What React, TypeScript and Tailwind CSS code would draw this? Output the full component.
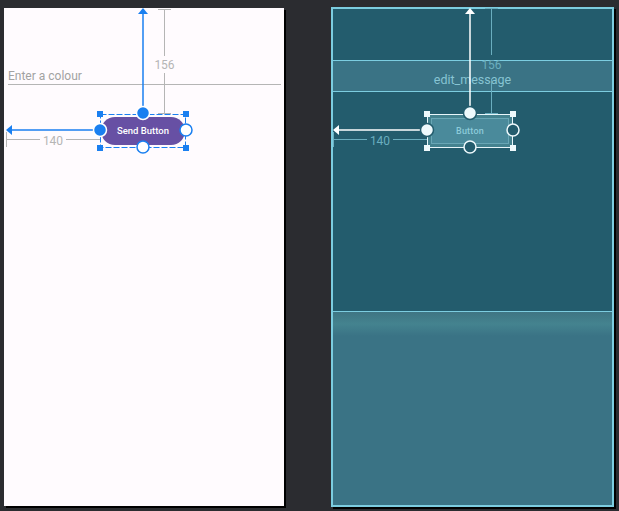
import React from 'react'

const font = { fontFamily: 'Roboto, "Liberation Sans", sans-serif' }

function Handles({ fill, ring, hollow }: { fill: string; ring: string; hollow: string }) {
  return (
    <>
      {[
        [96, 106],
        [182, 106],
        [96, 140],
        [182, 140],
      ].map(([x, y]) => (
        <rect key={`${x}-${y}`} x={x - 3} y={y - 3} width={6} height={6} fill={fill} />
      ))}
      <circle cx={139} cy={105} r={6.5} fill={fill} stroke={ring} strokeWidth={1.5} />
      <circle cx={96} cy={122} r={6.5} fill={fill} stroke={ring} strokeWidth={1.5} />
      <circle cx={182} cy={122} r={6} fill={hollow} stroke={fill} strokeWidth={1.5} />
      <circle cx={139} cy={139} r={6} fill={hollow} stroke={fill} strokeWidth={1.5} />
    </>
  )
}

function DesignView() {
  return (
    <div className="relative w-[280px] h-[498px] bg-[#fffbfe] shadow-[2px_2px_0_#000] flex flex-col pt-[60px] pl-[4px] pr-[3px]" style={font}>
      <div className="text-[12px] leading-[16px] text-[#a2a2a2]">Enter a colour</div>
      <div className="h-px bg-[#b5b5b5]" />
      <div className="mt-[32px] ml-[93px] w-[84px] h-[28px] rounded-full bg-[#6750a4] flex items-center justify-center text-[9.5px] font-medium text-white">
        Send Button
      </div>
      <svg className="absolute inset-0" width={280} height={498}>
        <g stroke="#b5b5b5" strokeWidth={1}>
          <line x1={160.5} y1={1} x2={160.5} y2={48} />
          <line x1={160.5} y1={65} x2={160.5} y2={105} />
          <line x1={154} y1={1.5} x2={167} y2={1.5} />
          <line x1={154} y1={105.5} x2={167} y2={105.5} />
          <line x1={2} y1={131.5} x2={36} y2={131.5} />
          <line x1={62} y1={131.5} x2={96} y2={131.5} />
          <line x1={2.5} y1={124} x2={2.5} y2={139} />
        </g>
        <line x1={139} y1={5} x2={139} y2={100} stroke="#1a7ff0" strokeWidth={1.5} />
        <polygon points="134,6 144,6 139,0" fill="#1a7ff0" />
        <line x1={6} y1={122} x2={90} y2={122} stroke="#1a7ff0" strokeWidth={1.5} />
        <polygon points="8,117 8,127 2,122" fill="#1a7ff0" />
        <rect x={96.5} y={106.5} width={85} height={33} fill="none" stroke="#1a7ff0" strokeWidth={1} strokeDasharray="6 2" />
        <Handles fill="#1a7ff0" ring="#ffffff" hollow="#ffffff" />
        <text x={160.5} y={61} textAnchor="middle" fontSize={12} fill="#b5b5b5" style={font}>156</text>
        <text x={49} y={137} textAnchor="middle" fontSize={12} fill="#b5b5b5" style={font}>140</text>
      </svg>
    </div>
  )
}

function BlueprintView() {
  return (
    <div className="relative w-[283px] h-[500px] border-2 border-[#7ccde0] bg-[#235c6d] flex flex-col shadow-[2px_2px_0_#000]" style={font}>
      <div className="h-[302px] flex flex-col">
        <div className="mt-[51px] h-[32px] border-y border-[#7ccde0] bg-[#3a7385] flex items-end justify-center pb-[3px] text-[12.5px] leading-[16px] text-[#87c4d3]">
          edit_message
        </div>
        <div className="mt-[22px] ml-[94px] w-[86px] h-[34px] bg-[#44828f] p-[4px] flex">
          <div className="flex-1 border border-[#68a6b5] bg-[#4a8a9b] flex items-center justify-center pt-[2px] text-[9px] font-medium tracking-wide text-[#8ccbda]">
            Button
          </div>
        </div>
      </div>
      <div className="flex-1 border-t border-[#7ccde0] bg-[linear-gradient(#3f7583,#44838f_12px,#3a7385_24px)]" />
      <svg className="absolute -left-[2px] -top-[2px]" width={283} height={500}>
        <g stroke="#6aaebf" strokeWidth={1}>
          <line x1={160.5} y1={1} x2={160.5} y2={48} />
          <line x1={160.5} y1={72} x2={160.5} y2={106} />
          <line x1={154} y1={1.5} x2={167} y2={1.5} />
          <line x1={154} y1={106.5} x2={167} y2={106.5} />
          <line x1={2} y1={132.5} x2={36} y2={132.5} />
          <line x1={62} y1={132.5} x2={96} y2={132.5} />
          <line x1={2.5} y1={125} x2={2.5} y2={140} />
        </g>
        <line x1={139} y1={5} x2={139} y2={100} stroke="#ffffff" strokeWidth={1.5} />
        <polygon points="134,7 144,7 139,1" fill="#ffffff" />
        <line x1={6} y1={123} x2={90} y2={123} stroke="#ffffff" strokeWidth={1.5} />
        <polygon points="8,118 8,128 2,123" fill="#ffffff" />
        <g transform="translate(0,1)">
          <rect x={96.5} y={106.5} width={85} height={33} fill="none" stroke="#e8f6fa" strokeWidth={1} />
          <Handles fill="#eef9fc" ring="#235c6d" hollow="#235c6d" />
        </g>
        <text x={160.5} y={62} textAnchor="middle" fontSize={12} fill="#6aaebf" style={font}>156</text>
        <text x={49} y={138} textAnchor="middle" fontSize={12} fill="#6aaebf" style={font}>140</text>
      </svg>
    </div>
  )
}

export default function App() {
  return (
    <div className="w-[619px] h-[511px] bg-[#2b2c30] overflow-hidden flex items-start gap-[47px] pl-[4px] pt-[7px]">
      <div className="pt-px">
        <DesignView />
      </div>
      <BlueprintView />
    </div>
  )
}
